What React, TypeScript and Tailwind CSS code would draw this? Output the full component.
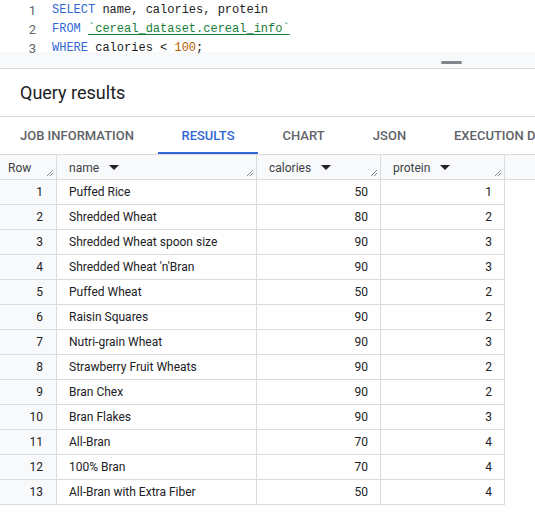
import { ReactNode } from "react";

const rows: [number, string, number, number][] = [
  [1, "Puffed Rice", 50, 1],
  [2, "Shredded Wheat", 80, 2],
  [3, "Shredded Wheat spoon size", 90, 3],
  [4, "Shredded Wheat 'n'Bran", 90, 3],
  [5, "Puffed Wheat", 50, 2],
  [6, "Raisin Squares", 90, 2],
  [7, "Nutri-grain Wheat", 90, 3],
  [8, "Strawberry Fruit Wheats", 90, 2],
  [9, "Bran Chex", 90, 2],
  [10, "Bran Flakes", 90, 3],
  [11, "All-Bran", 70, 4],
  [12, "100% Bran", 70, 4],
  [13, "All-Bran with Extra Fiber", 50, 4],
];

const tabs = [
  { label: "JOB INFORMATION", w: "w-[158px]", pl: "pl-5" },
  { label: "RESULTS", w: "w-[100px]", pl: "", active: true },
  { label: "CHART", w: "w-[91px]", pl: "" },
  { label: "JSON", w: "w-[81px]", pl: "" },
  { label: "EXECUTION DETAILS", w: "w-[160px]", pl: "pl-6" },
];

function ResizeMark() {
  return (
    <svg className="absolute bottom-[2px] right-[2px]" width="8" height="8" viewBox="0 0 8 8">
      <path d="M7 1L1 7M7 4L4 7" stroke="#80868b" strokeWidth="1" />
    </svg>
  );
}

function Caret() {
  return (
    <svg className="ml-[10px]" width="10" height="6" viewBox="0 0 10 6">
      <path d="M0 0h10L5 5z" fill="#202124" />
    </svg>
  );
}

function HeadCell({ w, children }: { w: string; children: ReactNode }) {
  return (
    <div className={`relative flex h-full items-center border-r border-[#dadce0] pt-px ${w}`}>
      {children}
      <ResizeMark />
    </div>
  );
}

export default function App() {
  return (
    <div className="h-[515px] w-[535px] overflow-hidden bg-white font-['Roboto',sans-serif] text-[#202124]">
      {/* editor */}
      <div className="h-[52px] pt-px font-['Liberation_Mono',monospace] text-[12px] leading-[19px]">
        {[
          <>
            <span className="text-[#3367d6]">SELECT</span> name, calories, protein
          </>,
          <>
            <span className="text-[#3367d6]">FROM</span>{" "}
            <span className="text-[#188038] underline decoration-[#188038] underline-offset-2">`cereal_dataset.cereal_info`</span>
          </>,
          <>
            <span className="text-[#3367d6]">WHERE</span> calories &lt; <span className="text-[#b06000]">100</span>;
          </>,
        ].map((line, i) => (
          <div key={i} className="flex">
            <span className="w-[37px] pr-[1px] text-right font-['Roboto',sans-serif] text-[13px] text-[#5f6368]">{i + 1}</span>
            <span className="ml-[15px] whitespace-pre">{line}</span>
          </div>
        ))}
      </div>
      <div className="flex h-[17px] items-end justify-start border-b border-[#dadce0] bg-[#f8f9fa] pb-[4px] pl-[441px]">
        <div className="h-[3px] w-[21px] rounded-full bg-[#80868b]" />
      </div>

      {/* title */}
      <div className="flex h-[48px] items-center border-b border-[#dadce0] pl-5 text-[18px]">Query results</div>

      {/* tabs */}
      <div className="flex h-[37px] whitespace-nowrap text-[13px] font-medium">
        {tabs.map((t) => (
          <div
            key={t.label}
            className={`flex shrink-0 items-center ${t.w} ${t.pl ? t.pl : "justify-center"} ${
              t.active ? "border-b-2 border-[#3367d6] pt-[2px] text-[#3367d6]" : "text-[#5f6368]"
            }`}
          >
            {t.label}
          </div>
        ))}
      </div>

      {/* table */}
      <div className="text-[12px]">
        <div className="flex h-[26px] border-y border-[#dadce0] bg-[#f8f9fa] text-[#3c4043]">
          <HeadCell w="w-[57px] pl-2">Row</HeadCell>
          <HeadCell w="w-[200px] pl-3">
            name
            <Caret />
          </HeadCell>
          <HeadCell w="w-[124px] pl-3">
            calories
            <Caret />
          </HeadCell>
          <HeadCell w="w-[124px] pl-3">
            protein
            <Caret />
          </HeadCell>
        </div>
        {rows.map(([n, name, cal, pro]) => (
          <div key={n} className="flex h-[25px] w-[505px] border-b border-[#dadce0]">
            <div className="flex w-[57px] items-center justify-end border-r border-[#dadce0] bg-[#f8f9fa] pr-[13px]">{n}</div>
            <div className="flex w-[200px] items-center border-r border-[#dadce0] pl-3">{name}</div>
            <div className="flex w-[124px] items-center justify-end border-r border-[#dadce0] pr-[12px]">{cal}</div>
            <div className="flex w-[124px] items-center justify-end border-r border-[#dadce0] pr-[12px]">{pro}</div>
          </div>
        ))}
      </div>
    </div>
  );
}
